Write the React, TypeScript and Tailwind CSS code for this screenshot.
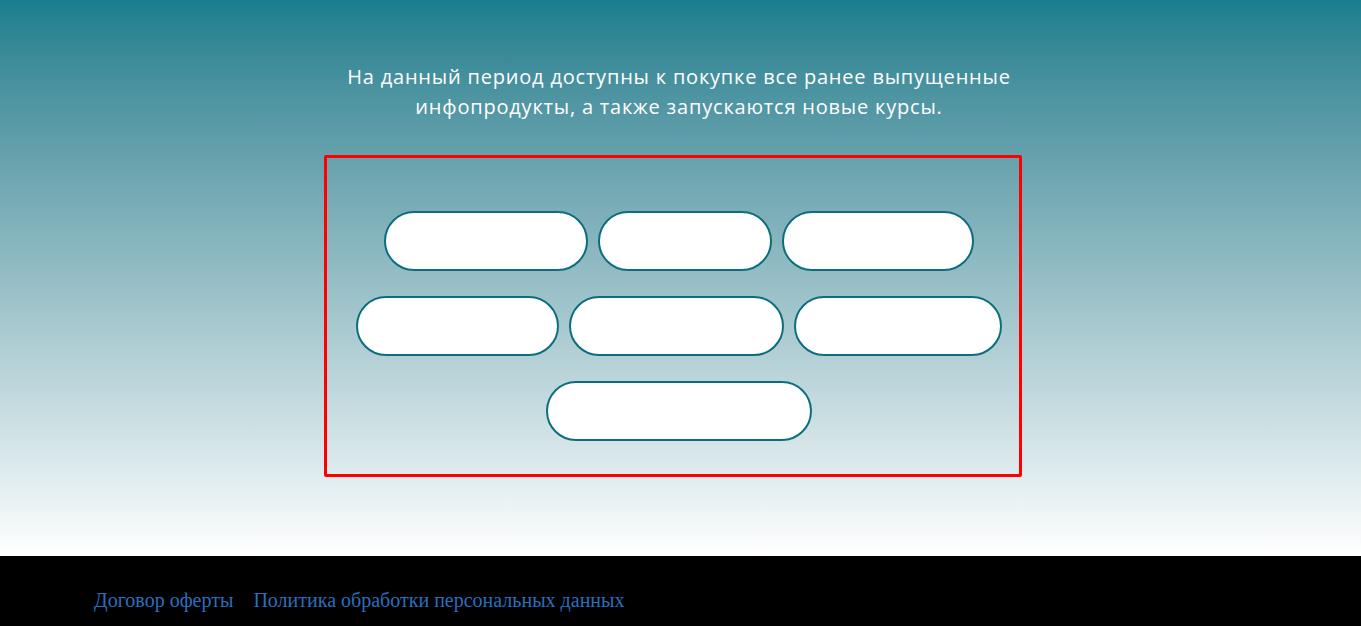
export default function App() {
  const rows = [
    ['w-[204px]', 'w-[174px]', 'w-[192px]'],
    ['w-[203px]', 'w-[215px]', 'w-[208px]'],
    ['w-[266px]'],
  ];

  return (
    <div className="min-h-screen flex flex-col">
      <section className="h-[556px] bg-gradient-to-b from-[#197e8e] to-[#ffffff] flex flex-col items-center">
        <p
          className="pt-[62px] pr-[3px] text-center text-white text-[20px] leading-[30px] tracking-[0.8px]"
          style={{ fontFamily: '"Open Sans", sans-serif' }}
        >
          На данный период доступны к покупке все ранее выпущенные
          <br />
          инфопродукты, а также запускаются новые курсы.
        </p>
        <div className="mt-[33px] mr-[15px] w-[698px] h-[322px] border-[3px] border-[#ff0000] rounded-[2px] pt-[53px] pl-[11px] flex flex-col gap-[25px]">
          {rows.map((row, i) => (
            <div key={i} className="flex justify-center gap-[10px]">
              {row.map((w, j) => (
                <button
                  key={j}
                  type="button"
                  className={`${w} h-[60px] rounded-full bg-white border-2 border-[#0b6e7f]`}
                />
              ))}
            </div>
          ))}
        </div>
      </section>
      <footer className="h-[70px] bg-black flex items-center pl-[94px] gap-[20px] pt-[18px]">
        <a
          href="#"
          className="text-[#2b6fbf] text-[20px]"
          style={{ fontFamily: '"Liberation Serif", serif' }}
        >
          Договор оферты
        </a>
        <a
          href="#"
          className="text-[#2b6fbf] text-[20px]"
          style={{ fontFamily: '"Liberation Serif", serif' }}
        >
          Политика обработки персональных данных
        </a>
      </footer>
    </div>
  );
}
